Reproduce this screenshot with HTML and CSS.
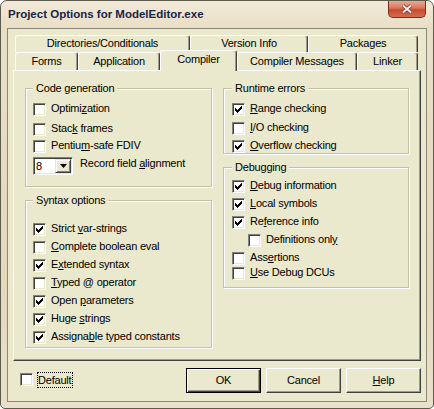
FILE: index.html
```html
<!DOCTYPE html>
<html>
<head>
<meta charset="utf-8">
<title>Project Options for ModelEditor.exe</title>
<link rel="stylesheet" href="styles.css">
</head>
<body>
<div class="window">
  <div class="titlebar">
    <span class="title">Project Options for ModelEditor.exe</span>
    <span class="close">
      <svg width="12" height="10" viewBox="0 0 12 10"><path d="M2 1.5L10 8.5M10 1.5L2 8.5" stroke="#7a3424" stroke-width="3.6" fill="none"/><path d="M2 1.5L10 8.5M10 1.5L2 8.5" stroke="#f4f0ee" stroke-width="2" fill="none"/></svg>
    </span>
  </div>
  <div class="client">
    <div class="tabctl">
      <div class="tabrow back">
        <div class="tab t-dir">Directories/Conditionals</div>
        <div class="tab t-ver">Version Info</div>
        <div class="tab t-pkg">Packages</div>
      </div>
      <div class="tabrow front">
        <div class="tab t-forms">Forms</div>
        <div class="tab t-app">Application</div>
        <div class="tab t-comp sel">Compiler</div>
        <div class="tab t-msg">Compiler Messages</div>
        <div class="tab t-link">Linker</div>
      </div>
      <div class="page">
        <div class="col">
          <fieldset class="group g-code">
            <legend>Code generation</legend>
            <div class="cb"><span class="box"></span><span class="lbl">Optimi<u>z</u>ation</span></div>
            <div class="cb m7"><span class="box"></span><span class="lbl">Stac<u>k</u> frames</span></div>
            <div class="cb m4"><span class="box"></span><span class="lbl">Pentiu<u>m</u>-safe FDIV</span></div>
            <div class="combo-row">
              <div class="combo"><span class="combo-val">8</span><span class="drop"><svg width="7" height="4" viewBox="0 0 7 4"><path d="M0 0h7L3.5 4z" fill="#000"/></svg></span></div>
              <span class="combo-lbl">Record field <u>a</u>lignment</span>
            </div>
          </fieldset>
          <fieldset class="group g-syntax">
            <legend>Syntax options</legend>
            <div class="cb"><span class="box on"><svg width="7" height="7" viewBox="0 0 7 7"><path d="M6 0h1v1h-1zM5 1h2v1h-2zM0 2h1v1h-1zM4 2h3v1h-3zM0 3h2v1h-2zM3 3h3v1h-3zM0 4h5v1h-5zM1 5h3v1h-3zM2 6h1v1h-1z" fill="#000"/></svg></span><span class="lbl">Strict <u>v</u>ar-strings</span></div>
            <div class="cb m5"><span class="box"></span><span class="lbl"><u>C</u>omplete boolean eval</span></div>
            <div class="cb m5"><span class="box on"><svg width="7" height="7" viewBox="0 0 7 7"><path d="M6 0h1v1h-1zM5 1h2v1h-2zM0 2h1v1h-1zM4 2h3v1h-3zM0 3h2v1h-2zM3 3h3v1h-3zM0 4h5v1h-5zM1 5h3v1h-3zM2 6h1v1h-1z" fill="#000"/></svg></span><span class="lbl">E<u>x</u>tended syntax</span></div>
            <div class="cb m5"><span class="box"></span><span class="lbl"><u>T</u>yped @ operator</span></div>
            <div class="cb m5"><span class="box on"><svg width="7" height="7" viewBox="0 0 7 7"><path d="M6 0h1v1h-1zM5 1h2v1h-2zM0 2h1v1h-1zM4 2h3v1h-3zM0 3h2v1h-2zM3 3h3v1h-3zM0 4h5v1h-5zM1 5h3v1h-3zM2 6h1v1h-1z" fill="#000"/></svg></span><span class="lbl">Open <u>p</u>arameters</span></div>
            <div class="cb m5"><span class="box on"><svg width="7" height="7" viewBox="0 0 7 7"><path d="M6 0h1v1h-1zM5 1h2v1h-2zM0 2h1v1h-1zM4 2h3v1h-3zM0 3h2v1h-2zM3 3h3v1h-3zM0 4h5v1h-5zM1 5h3v1h-3zM2 6h1v1h-1z" fill="#000"/></svg></span><span class="lbl">Huge <u>s</u>trings</span></div>
            <div class="cb m5"><span class="box on"><svg width="7" height="7" viewBox="0 0 7 7"><path d="M6 0h1v1h-1zM5 1h2v1h-2zM0 2h1v1h-1zM4 2h3v1h-3zM0 3h2v1h-2zM3 3h3v1h-3zM0 4h5v1h-5zM1 5h3v1h-3zM2 6h1v1h-1z" fill="#000"/></svg></span><span class="lbl">Assigna<u>b</u>le typed constants</span></div>
          </fieldset>
        </div>
        <div class="col">
          <fieldset class="group g-runtime">
            <legend>Runtime errors</legend>
            <div class="cb"><span class="box on"><svg width="7" height="7" viewBox="0 0 7 7"><path d="M6 0h1v1h-1zM5 1h2v1h-2zM0 2h1v1h-1zM4 2h3v1h-3zM0 3h2v1h-2zM3 3h3v1h-3zM0 4h5v1h-5zM1 5h3v1h-3zM2 6h1v1h-1z" fill="#000"/></svg></span><span class="lbl"><u>R</u>ange checking</span></div>
            <div class="cb m6"><span class="box"></span><span class="lbl"><u>I</u>/O checking</span></div>
            <div class="cb m5"><span class="box on"><svg width="7" height="7" viewBox="0 0 7 7"><path d="M6 0h1v1h-1zM5 1h2v1h-2zM0 2h1v1h-1zM4 2h3v1h-3zM0 3h2v1h-2zM3 3h3v1h-3zM0 4h5v1h-5zM1 5h3v1h-3zM2 6h1v1h-1z" fill="#000"/></svg></span><span class="lbl"><u>O</u>verflow checking</span></div>
          </fieldset>
          <fieldset class="group g-debug">
            <legend>Debugging</legend>
            <div class="cb"><span class="box on"><svg width="7" height="7" viewBox="0 0 7 7"><path d="M6 0h1v1h-1zM5 1h2v1h-2zM0 2h1v1h-1zM4 2h3v1h-3zM0 3h2v1h-2zM3 3h3v1h-3zM0 4h5v1h-5zM1 5h3v1h-3zM2 6h1v1h-1z" fill="#000"/></svg></span><span class="lbl"><u>D</u>ebug information</span></div>
            <div class="cb m5"><span class="box on"><svg width="7" height="7" viewBox="0 0 7 7"><path d="M6 0h1v1h-1zM5 1h2v1h-2zM0 2h1v1h-1zM4 2h3v1h-3zM0 3h2v1h-2zM3 3h3v1h-3zM0 4h5v1h-5zM1 5h3v1h-3zM2 6h1v1h-1z" fill="#000"/></svg></span><span class="lbl"><u>L</u>ocal symbols</span></div>
            <div class="cb m5"><span class="box on"><svg width="7" height="7" viewBox="0 0 7 7"><path d="M6 0h1v1h-1zM5 1h2v1h-2zM0 2h1v1h-1zM4 2h3v1h-3zM0 3h2v1h-2zM3 3h3v1h-3zM0 4h5v1h-5zM1 5h3v1h-3zM2 6h1v1h-1z" fill="#000"/></svg></span><span class="lbl">Re<u>f</u>erence info</span></div>
            <div class="cb m5 indent"><span class="box"></span><span class="lbl">Definitions onl<u>y</u></span></div>
            <div class="cb m5"><span class="box"></span><span class="lbl">Ass<u>e</u>rtions</span></div>
            <div class="cb m2"><span class="box"></span><span class="lbl"><u>U</u>se Debug DCUs</span></div>
          </fieldset>
        </div>
      </div>
    </div>
    <div class="bottom">
      <div class="default">
        <span class="box"></span>
        <span class="focus">Default</span>
      </div>
      <div class="buttons">
        <div class="btn btn-default">OK</div>
        <div class="btn">Cancel</div>
        <div class="btn"><span><u>H</u>elp</span></div>
      </div>
    </div>
  </div>
</div>
</body>
</html>
```
FILE: styles.css
```css
:root {
  --face: #eae8cd;
  --dark: #404040;
  --shadow: #9f9d89;
}
* { box-sizing: border-box; }
html, body { margin: 0; padding: 0; }
body {
  width: 434px;
  height: 409px;
  overflow: hidden;
  background: #ffffff;
  font-family: "Liberation Sans", Arial, sans-serif;
  font-size: 11px;
  letter-spacing: -0.2px;
  color: #000;
}
.window {
  width: 434px;
  height: 409px;
  border: 1px solid #5e5a4c;
  border-radius: 7px 7px 5px 5px;
  background: linear-gradient(to bottom, #f2ead8 0, #e9dfc7 26px, #e4d8bd 70%, #eae0ca 100%);
  display: flex;
  flex-direction: column;
  overflow: hidden;
}
.titlebar {
  flex: none;
  height: 27px;
  display: flex;
  align-items: flex-start;
  padding-left: 7px;
}
.title {
  margin-top: 6px;
  font-weight: bold;
  font-size: 11.5px;
  line-height: 14px;
  letter-spacing: 0;
  color: #16244a;
}
.close {
  margin-left: auto;
  margin-right: 7px;
  width: 38px;
  height: 17px;
  border: 1px solid #7a3120;
  border-top: none;
  border-radius: 0 0 5px 5px;
  background: linear-gradient(to bottom, #eba996 0, #d9755b 45%, #c64a2e 55%, #d36c50 100%);
  display: flex;
  align-items: center;
  justify-content: center;
}
.close svg { display: block; }
.client {
  flex: none;
  margin: 0 6px;
  height: 374px;
  border: 1px solid #8d8876;
  background: var(--face);
}
.tabctl {
  margin: 6px 0 0 5px;
  width: 408px;
}
.tabrow {
  display: flex;
  padding-left: 2px;
}
.tabrow.back { height: 17px; }
.tabrow.front { height: 18px; align-items: flex-end; }
.tab {
  flex: none;
  height: 100%;
  text-align: center;
  line-height: 13px;
  padding-top: 1px;
  white-space: nowrap;
  background: var(--face);
  border-top: 1px solid #fff;
  border-left: 1px solid #fff;
  border-right: 1px solid var(--dark);
  box-shadow: inset -1px 0 var(--shadow);
  border-radius: 3px 3px 0 0;
}
.front .tab { height: 18px; padding-top: 2px; }
.front .tab.sel {
  height: 21px;
  margin-bottom: -1px;
  position: relative;
  z-index: 1;
}
.t-dir { width: 175px; }
.t-ver { width: 118px; }
.t-pkg { width: 110px; }
.t-forms { width: 63px; }
.t-app { width: 82px; }
.t-comp { width: 77px; }
.t-msg { width: 120px; }
.t-link { width: 61px; }
.page {
  height: 291px;
  border: 1px solid;
  border-color: #fff var(--dark) var(--dark) #fff;
  box-shadow: inset -1px -1px var(--shadow);
  display: grid;
  grid-template-columns: 187px 186px;
  column-gap: 11px;
  align-items: start;
  padding: 11px 0 0 11px;
}
.col {
  display: flex;
  flex-direction: column;
  gap: 7px;
}
.group {
  margin: 0;
  min-width: 0;
  border: 1px solid #c3c1a7;
  box-shadow: inset 1px 1px #fff, 1px 1px #fff;
  padding: 0 0 0 7px;
}
.group legend {
  padding: 0 3px;
  line-height: 13px;
  background: var(--face);
}
.g-code { height: 105px; padding-top: 8px; }
.g-syntax { height: 154px; padding-top: 16px; }
.g-runtime { height: 72px; padding-top: 8px; padding-left: 8px; }
.g-debug { height: 127px; padding-top: 6px; padding-left: 8px; }
.cb {
  display: flex;
  align-items: flex-start;
  height: 13px;
}
.m2 { margin-top: 2px; }
.m4 { margin-top: 4px; }
.m5 { margin-top: 5px; }
.m6 { margin-top: 6px; }
.m7 { margin-top: 7px; }
.indent { margin-left: 16px; }
.box {
  flex: none;
  width: 13px;
  height: 13px;
  border: 1px solid;
  border-color: #808080 #fff #fff #808080;
  box-shadow: inset 1px 1px var(--dark), inset -1px -1px var(--face);
  background: #fff;
  display: flex;
  align-items: center;
  justify-content: center;
}
.box svg { display: block; }
.lbl {
  margin-left: 5px;
  line-height: 11px;
  white-space: nowrap;
}
.combo-row {
  display: flex;
  align-items: flex-start;
  margin-top: 4px;
  height: 18px;
}
.combo {
  flex: none;
  width: 40px;
  height: 18px;
  border: 1px solid;
  border-color: #808080 #fff #fff #808080;
  box-shadow: inset 1px 1px var(--dark), inset -1px -1px var(--face);
  background: #fff;
  display: flex;
  padding: 1px;
}
.combo-val {
  flex: 1;
  padding-left: 1px;
  line-height: 14px;
}
.drop {
  flex: none;
  width: 16px;
  height: 14px;
  background: var(--face);
  border: 1px solid;
  border-color: var(--face) var(--dark) var(--dark) var(--face);
  box-shadow: inset 1px 1px #fff, inset -1px -1px #808080;
  display: flex;
  align-items: center;
  justify-content: center;
}
.drop svg { display: block; }
.combo-lbl {
  margin-left: 7px;
  margin-top: 1px;
  line-height: 11px;
  white-space: nowrap;
}
.bottom {
  display: flex;
  align-items: flex-start;
  margin-top: 7px;
  padding: 0 5px 0 12px;
}
.default {
  display: flex;
  align-items: flex-start;
  margin-top: 5px;
}
.focus {
  margin-left: 4px;
  margin-top: -1px;
  height: 16px;
  line-height: 14px;
  border: 1px dotted #000;
  padding-right: 1px;
}
.buttons {
  margin-left: auto;
  display: flex;
  gap: 5px;
}
.btn {
  width: 75px;
  height: 25px;
  border: 1px solid;
  border-color: #fff var(--dark) var(--dark) #fff;
  box-shadow: inset -1px -1px var(--shadow);
  display: flex;
  align-items: center;
  justify-content: center;
  line-height: 13px;
  background: var(--face);
}
.btn-default {
  border-color: #000;
  box-shadow: inset 1px 1px #fff, inset -1px -1px var(--dark), inset -2px -2px var(--shadow);
}
```
